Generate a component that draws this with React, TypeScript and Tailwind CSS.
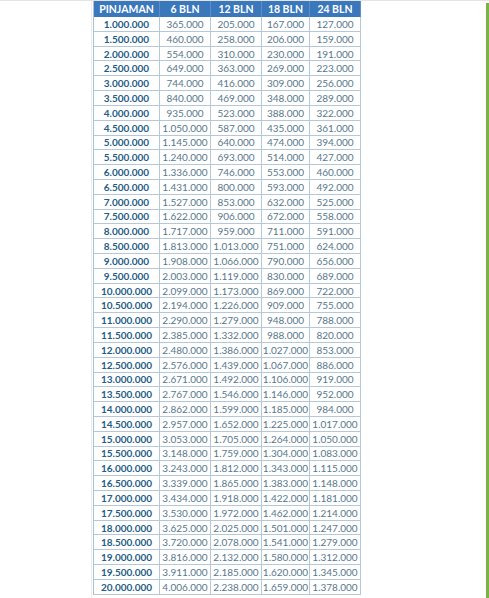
import React from "react";

const rows: string[][] = [
  ["1.000.000", "365.000", "205.000", "167.000", "127.000"],
  ["1.500.000", "460.000", "258.000", "206.000", "159.000"],
  ["2.000.000", "554.000", "310.000", "230.000", "191.000"],
  ["2.500.000", "649.000", "363.000", "269.000", "223.000"],
  ["3.000.000", "744.000", "416.000", "309.000", "256.000"],
  ["3.500.000", "840.000", "469.000", "348.000", "289.000"],
  ["4.000.000", "935.000", "523.000", "388.000", "322.000"],
  ["4.500.000", "1.050.000", "587.000", "435.000", "361.000"],
  ["5.000.000", "1.145.000", "640.000", "474.000", "394.000"],
  ["5.500.000", "1.240.000", "693.000", "514.000", "427.000"],
  ["6.000.000", "1.336.000", "746.000", "553.000", "460.000"],
  ["6.500.000", "1.431.000", "800.000", "593.000", "492.000"],
  ["7.000.000", "1.527.000", "853.000", "632.000", "525.000"],
  ["7.500.000", "1.622.000", "906.000", "672.000", "558.000"],
  ["8.000.000", "1.717.000", "959.000", "711.000", "591.000"],
  ["8.500.000", "1.813.000", "1.013.000", "751.000", "624.000"],
  ["9.000.000", "1.908.000", "1.066.000", "790.000", "656.000"],
  ["9.500.000", "2.003.000", "1.119.000", "830.000", "689.000"],
  ["10.000.000", "2.099.000", "1.173.000", "869.000", "722.000"],
  ["10.500.000", "2.194.000", "1.226.000", "909.000", "755.000"],
  ["11.000.000", "2.290.000", "1.279.000", "948.000", "788.000"],
  ["11.500.000", "2.385.000", "1.332.000", "988.000", "820.000"],
  ["12.000.000", "2.480.000", "1.386.000", "1.027.000", "853.000"],
  ["12.500.000", "2.576.000", "1.439.000", "1.067.000", "886.000"],
  ["13.000.000", "2.671.000", "1.492.000", "1.106.000", "919.000"],
  ["13.500.000", "2.767.000", "1.546.000", "1.146.000", "952.000"],
  ["14.000.000", "2.862.000", "1.599.000", "1.185.000", "984.000"],
  ["14.500.000", "2.957.000", "1.652.000", "1.225.000", "1.017.000"],
  ["15.000.000", "3.053.000", "1.705.000", "1.264.000", "1.050.000"],
  ["15.500.000", "3.148.000", "1.759.000", "1.304.000", "1.083.000"],
  ["16.000.000", "3.243.000", "1.812.000", "1.343.000", "1.115.000"],
  ["16.500.000", "3.339.000", "1.865.000", "1.383.000", "1.148.000"],
  ["17.000.000", "3.434.000", "1.918.000", "1.422.000", "1.181.000"],
  ["17.500.000", "3.530.000", "1.972.000", "1.462.000", "1.214.000"],
  ["18.000.000", "3.625.000", "2.025.000", "1.501.000", "1.247.000"],
  ["18.500.000", "3.720.000", "2.078.000", "1.541.000", "1.279.000"],
  ["19.000.000", "3.816.000", "2.132.000", "1.580.000", "1.312.000"],
  ["19.500.000", "3.911.000", "2.185.000", "1.620.000", "1.345.000"],
  ["20.000.000", "4.006.000", "2.238.000", "1.659.000", "1.378.000"],
];

const headers = ["PINJAMAN", "6 BLN", "12 BLN", "18 BLN", "24 BLN"];

export default function App() {
  return (
    <div
      className="flex h-[598px] w-[489px] overflow-hidden bg-white border-t border-[#e4e4e4]"
      style={{ fontFamily: "Lato, 'Open Sans', sans-serif" }}
    >
      {/* empty sheet area on the left */}
      <div className="w-[92px] shrink-0 border-r border-[#ececec] mr-[1px]" />

      <div className="flex flex-col shrink-0 border-l border-[#a9c0d6] h-fit">
        <div className="grid grid-cols-[66px_51px_51px_48px_51px] h-[16px] bg-[#3a77bb]">
          {headers.map((h) => (
            <div
              key={h}
              className="flex items-center justify-center text-[10.5px] font-bold text-white border-r border-[#5b8fc8] leading-none"
            >
              {h}
            </div>
          ))}
        </div>
        {rows.map((r) => (
          <div
            key={r[0]}
            className="grid grid-cols-[66px_51px_51px_48px_51px] h-[14.82px] border-b border-[#b4c8da]"
          >
            {r.map((c, i) => (
              <div
                key={i}
                className={
                  i === 0
                    ? "flex items-center justify-center text-[10px] font-bold text-[#245c85] border-r border-[#b4c8da] leading-none"
                    : "flex items-center justify-center text-[10px] text-[#58778c] border-r border-[#b4c8da] leading-none"
                }
              >
                {c}
              </div>
            ))}
          </div>
        ))}
      </div>

      <div className="flex-1" />
      <div className="w-[3px] shrink-0 mt-[2px] bg-[#78b444]" />
    </div>
  );
}
